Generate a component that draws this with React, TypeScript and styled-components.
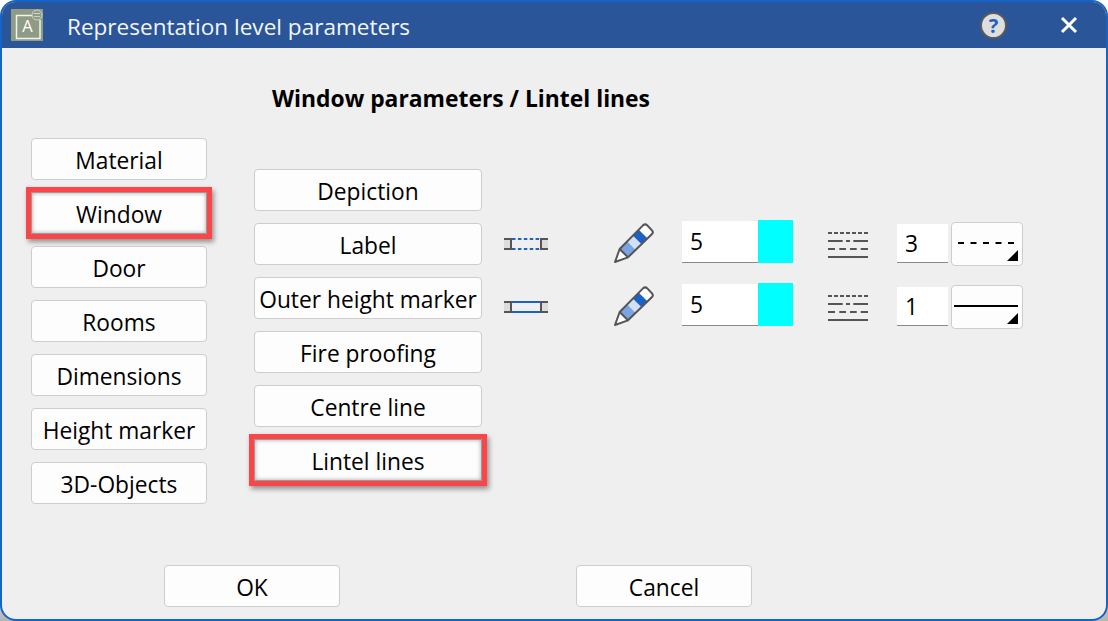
import React from 'react';
import styled, { createGlobalStyle } from 'styled-components';

const Global = createGlobalStyle`
  html, body { margin: 0; padding: 0; background: #fff; }
  body { font-family: "Open Sans", "Noto Sans", "Liberation Sans", sans-serif; color: #000; }
  #root { width: 1108px; height: 621px; overflow: hidden; }
`;

const Page = styled.div`
  width: 1108px;
  height: 621px;
  background: linear-gradient(to bottom, #fff 0, #fff 560px, #b4b4b4 621px);
`;

const Win = styled.div`
  box-sizing: border-box;
  width: 1108px;
  height: 621px;
  display: flex;
  flex-direction: column;
  background: #efefef;
  border: 2px solid #1565c8;
  border-radius: 16px;
  overflow: hidden;
`;

const TitleBar = styled.div`
  flex: 0 0 46px;
  display: flex;
  align-items: center;
  background: #2a5599;
  padding-left: 9px;
  color: #f4f6fa;
`;

const AppIcon = styled.svg`
  width: 32px;
  height: 32px;
  display: block;
`;

const Title = styled.div`
  margin-left: 24px;
  font-size: 22.55px;
  line-height: 32px;
  padding-top: 4px;
  flex: 1;
`;

const Help = styled.div`
  box-sizing: border-box;
  width: 27px;
  height: 27px;
  border-radius: 50%;
  background: #dedede;
  border: 2px solid #5a5a5a;
  color: #1f62c4;
  font: 700 20px/23px "Open Sans", sans-serif;
  text-align: center;
`;

const CloseIcon = styled.svg`
  width: 18px;
  height: 18px;
  margin-left: 53px;
  margin-right: 28px;
  display: block;
`;

const Content = styled.div`
  flex: 1;
  display: flex;
  flex-direction: column;
  padding: 0 0 12px 29px;
`;

const Main = styled.div`
  flex: 1;
  display: flex;
  gap: 47px;
`;

const LeftCol = styled.div`
  width: 176px;
  padding-top: 90px;
  display: flex;
  flex-direction: column;
  gap: 12px;
`;

const Right = styled.div`
  flex: 1;
  display: flex;
  flex-direction: column;
`;

const Heading = styled.div`
  margin: 35px 0 0 18px;
  height: 32px;
  font-size: 22.85px;
  line-height: 32px;
  font-weight: 700;
`;

const Panels = styled.div`
  margin-top: 54px;
  display: flex;
  gap: 22px;
`;

const MidCol = styled.div`
  width: 228px;
  display: flex;
  flex-direction: column;
  gap: 12px;
`;

const Btn = styled.div<{ $on?: boolean; $w?: number }>`
  box-sizing: border-box;
  height: 42px;
  width: ${p => (p.$w ? `${p.$w}px` : '100%')};
  display: flex;
  align-items: center;
  justify-content: center;
  padding-top: 3px;
  background: #fdfdfd;
  border: 1px solid ${p => (p.$on ? '#9a9a9a' : '#cdcdcd')};
  border-radius: ${p => (p.$on ? '0' : '4px')};
  font-size: 22.75px;
  white-space: nowrap;
  ${p =>
    p.$on
      ? `box-shadow: 0 0 0 5px #fb4548, 2px 3px 5px 5px rgba(0,0,0,.4), inset 0 0 4px rgba(0,0,0,.35);`
      : ''}
`;

const Params = styled.div`
  margin-top: 51px;
  display: flex;
  flex-direction: column;
  gap: 20px;
`;

const Row = styled.div`
  height: 43px;
  display: flex;
  align-items: flex-start;
`;

const LineIcon = styled.svg`
  flex: none;
  width: 44px;
  height: 12px;
  display: block;
  margin-top: 18px;
`;

const Pencil = styled.svg`
  flex: none;
  width: 42px;
  height: 40px;
  display: block;
  margin: 3px 0 0 65px;
`;

const NumField = styled.div<{ $w: number; $left: number; $h: number }>`
  box-sizing: border-box;
  flex: none;
  width: ${p => p.$w}px;
  height: ${p => p.$h}px;
  margin-left: ${p => p.$left}px;
  align-self: flex-end;
  display: flex;
  align-items: center;
  padding-left: 8px;
  background: #fff;
  border-bottom: 1px solid #8a8a8a;
  font-size: 22.75px;
`;

const Swatch = styled.div`
  flex: none;
  width: 35px;
  height: 43px;
  background: #00ffff;
`;

const StyleIcon = styled.svg`
  flex: none;
  width: 40px;
  height: 28px;
  display: block;
  margin: 10px 0 0 35px;
`;

const LinePick = styled.div`
  box-sizing: border-box;
  flex: none;
  width: 72px;
  height: 44px;
  margin: 2px 0 0 3px;
  background: #fdfdfd;
  border: 1px solid #cdcdcd;
  border-radius: 4px;
`;

const PickSvg = styled.svg`
  width: 70px;
  height: 42px;
  display: block;
`;

const Footer = styled.div`
  display: flex;
  gap: 236px;
  padding-left: 133px;
`;

const LinePreview = ({ dashed }: { dashed: boolean }) => (
  <LineIcon viewBox="0 0 44 12">
    <rect x="0" y="1" width="7" height="10" fill="#dcdcdc" />
    <rect x="37" y="1" width="7" height="10" fill="#dcdcdc" />
    <path
      d="M8 1H36M8 11H36"
      stroke="#1f62c4"
      strokeWidth="2"
      strokeDasharray={dashed ? '3.5 2.4' : undefined}
      fill="none"
    />
    <path d="M0 1H7V11H0M44 1H37V11H44" stroke="#555" strokeWidth="2" fill="none" />
  </LineIcon>
);

const PencilIcon = () => (
  <Pencil viewBox="355 40 126 120">
    <path d="M375 118 L400 143 L361 157 Z" fill="#fff" />
    <path d="M375 118 L398 95 L423 120 L400 143 Z" fill="#7aa5e2" />
    <path d="M398 95 L415 78 L440 103 L423 120 Z" fill="#d2e0f5" />
    <path d="M415 78 L433 60 L458 85 L440 103 Z" fill="#1a62c8" />
    <path d="M433 60 L448 45 L473 70 L458 85 Z" fill="#fff" />
    <path
      d="M375 118 L445 47 Q452 41 458 47 L472 62 Q477 68 472 73 L400 143 L361 157 Z M375 118 L400 143"
      fill="none"
      stroke="#555"
      strokeWidth="6"
      strokeLinejoin="round"
    />
  </Pencil>
);

const StylesIcon = () => (
  <StyleIcon viewBox="0 0 40 28">
    <g stroke="#555" strokeWidth="2" fill="none">
      <path d="M0 3H40" strokeDasharray="4 2" />
      <path d="M0 11H14.7M18 11H22M25.3 11H40" />
      <path d="M0 19H7M11.3 19H18M22 19H28.7M32.7 19H40" />
      <path d="M0 27H40" />
    </g>
  </StyleIcon>
);

const Picker = ({ dashed }: { dashed: boolean }) => (
  <LinePick>
    <PickSvg viewBox="0 0 70 42">
      {dashed ? (
        <path d="M6 20H62" stroke="#000" strokeWidth="2" strokeDasharray="6 6.5" />
      ) : (
        <path d="M2 20H66" stroke="#000" strokeWidth="2" />
      )}
      <path d="M55 38H66V27Z" fill="#000" />
    </PickSvg>
  </LinePick>
);

const ParamRow = ({ dashed, value }: { dashed: boolean; value: string }) => (
  <Row>
    <LinePreview dashed={dashed} />
    <PencilIcon />
    <NumField $w={76} $left={27} $h={42}>5</NumField>
    <Swatch />
    <StylesIcon />
    <NumField $w={51} $left={29} $h={39}>{value}</NumField>
    <Picker dashed={dashed} />
  </Row>
);

const left = ['Material', 'Window', 'Door', 'Rooms', 'Dimensions', 'Height marker', '3D-Objects'];
const mid = ['Depiction', 'Label', 'Outer height marker', 'Fire proofing', 'Centre line', 'Lintel lines'];

export default function App() {
  return (
    <Page>
      <Global />
      <Win>
        <TitleBar>
          <AppIcon viewBox="0 0 32 32">
            <rect width="32" height="32" fill="#8f9b85" />
            <path d="M21 6.5H5.5V29.5H29V11" fill="none" stroke="#f2f4ee" strokeWidth="1.5" />
            <text x="16.5" y="23" textAnchor="middle" fontSize="16.5" fill="#fff" fontFamily="Open Sans, sans-serif">A</text>
            <circle cx="26" cy="6" r="5" fill="#8f9b85" stroke="#cfd4c8" strokeWidth="1" />
            <path d="M23 4.5H29M23 7.5H29" stroke="#cfd4c8" strokeWidth="1" />
          </AppIcon>
          <Title>Representation level parameters</Title>
          <Help>?</Help>
          <CloseIcon viewBox="0 0 18 18">
            <path d="M2 2L16 16M16 2L2 16" stroke="#fff" strokeWidth="3" />
          </CloseIcon>
        </TitleBar>
        <Content>
          <Main>
            <LeftCol>
              {left.map(t => (
                <Btn key={t} $on={t === 'Window'}>{t}</Btn>
              ))}
            </LeftCol>
            <Right>
              <Heading>Window parameters / Lintel lines</Heading>
              <Panels>
                <MidCol>
                  {mid.map(t => (
                    <Btn key={t} $on={t === 'Lintel lines'}>{t}</Btn>
                  ))}
                </MidCol>
                <Params>
                  <ParamRow dashed value="3" />
                  <ParamRow dashed={false} value="1" />
                </Params>
              </Panels>
            </Right>
          </Main>
          <Footer>
            <Btn $w={176}>OK</Btn>
            <Btn $w={176}>Cancel</Btn>
          </Footer>
        </Content>
      </Win>
    </Page>
  );
}
